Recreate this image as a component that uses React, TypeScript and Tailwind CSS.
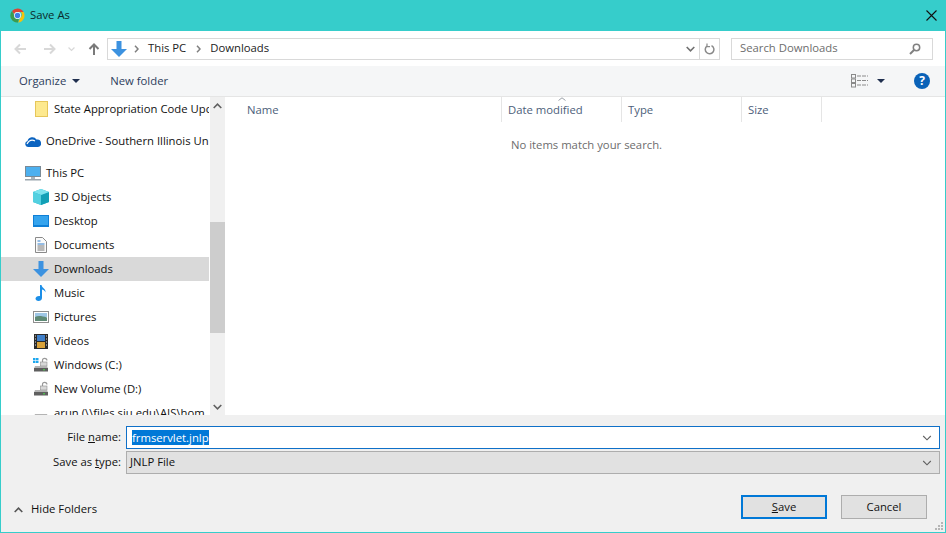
import React from "react";

const F = { fontFamily: '"Open Sans","Noto Sans",sans-serif' };

function Chrome() {
  return (
    <svg width="15" height="15" viewBox="0 0 16 16">
      <path d="M8 .5a7.500 7.500 0 0 1 6.500 3.800H8a3.700 3.700 0 0 0-3.500 2.500L2.100 3.300A7.500 7.500 0 0 1 8 .5z" fill="#db4437" />
      <path d="M14.500 4.300A7.500 7.500 0 0 1 8.600 15.500l2.700-5.600a3.700 3.700 0 0 0 .1-5.600z" fill="#f4c20d" />
      <path d="M8.600 15.500A7.500 7.500 0 0 1 2.100 3.300l3.200 5.900a3.500 3.500 0 0 0 4.100 2.200z" fill="#3b9c4f" />
      <circle cx="8" cy="8" r="3.700" fill="#fff" />
      <circle cx="8" cy="8" r="2.900" fill="#3d7fe6" />
    </svg>
  );
}

function DownArrow({ size = 16 }: { size?: number }) {
  return (
    <svg width={size} height={size} viewBox="0 0 16 16">
      <path d="M5.500 0h5v8H16l-8 8-8-8h5.500z" fill="#3c92e0" />
    </svg>
  );
}

function Arrow({ dir, color }: { dir: "left" | "right" | "up"; color: string }) {
  const d =
    dir === "left"
      ? "M13 7H3M7 2.500 2.500 7 7 11.500"
      : dir === "right"
      ? "M1 7h10M7 2.500 11.500 7 7 11.500"
      : "M7 13V3M2.500 7 7 2.500 11.500 7";
  return (
    <svg width="14" height="14" viewBox="0 0 14 14" fill="none" stroke={color} strokeWidth="2">
      <path d={d} />
    </svg>
  );
}

function Chevron({ color = "#6d6d6d", up = false, w = 9, sw = 1.6 }: { color?: string; up?: boolean; w?: number; sw?: number }) {
  return (
    <svg width={w} height={6} viewBox="0 0 9 6" fill="none" stroke={color} strokeWidth={sw}>
      <path d={up ? "M.7 5 4.500 1.200 8.300 5" : "M.7 1 4.500 4.800 8.300 1"} />
    </svg>
  );
}

function Caret() {
  return (
    <svg width="8" height="4" viewBox="0 0 8 4">
      <path d="M0 0h8L4 4z" fill="#1f2f4f" />
    </svg>
  );
}

function Drive({ win, lock = true }: { win?: boolean; lock?: boolean }) {
  return (
    <svg width="16" height="16" viewBox="0 0 16 16">
      {win && (
        <g fill="#1ea7ee">
          <rect x="0" y="1" width="2.500" height="2.200" />
          <rect x="3" y="1" width="2.500" height="2.200" />
          <rect x="0" y="3.800" width="2.500" height="2.200" />
          <rect x="3" y="3.800" width="2.500" height="2.200" />
        </g>
      )}
      {lock && (
        <>
          <path d="M9.500 6V3.500a2.200 2.200 0 0 1 4.400 0" fill="none" stroke="#9a9a9a" strokeWidth="1.200" />
          <rect x="7.500" y="5" width="6.500" height="4" fill="#d8d8d8" stroke="#8f8f8f" strokeWidth=".6" />
        </>
      )}
      <path d="M2 9h12l1 2.500H1z" fill="#b4b4b4" />
      <rect x="1" y="11" width="14" height="3.500" fill="#5f5f5f" />
      <rect x="10" y="12.300" width="2" height="1" fill="#4ade4a" />
    </svg>
  );
}

const Item = ({ indent = true, icon, label, active, cls = "" }: { indent?: boolean; icon: React.ReactNode; label: string; active?: boolean; cls?: string }) => (
  <div className={`flex items-center h-6 shrink-0 whitespace-nowrap overflow-hidden ${indent ? "pl-8" : "pl-6"} ${active ? "bg-[#d9d9d9]" : ""} ${cls}`}>
    <span className="w-4 h-4 shrink-0 flex items-center justify-center">{icon}</span>
    <span className="ml-[5px] pt-[1px] text-[#111]">{label}</span>
  </div>
);

const Col = ({ w, label, caret }: { w: string; label: string; caret?: boolean }) => (
  <div className={`${w} relative h-[25px] border-r border-[#e5e5e5] flex items-center pt-[1px] text-[#4c607a] shrink-0`}>
    {caret && (
      <span className="absolute left-[56px] top-0 flex">
        <svg width="8" height="4" viewBox="0 0 8 4" fill="none" stroke="#9aa0a8"><path d="M.5 3.500 4 .8 7.500 3.500" /></svg>
      </span>
    )}
    {label}
  </div>
);

export default function App() {
  return (
    <div style={F} className="w-[946px] h-[533px] flex flex-col overflow-hidden bg-white border border-t-0 border-[#36cdcb] text-[11.3px]">
      <div className="h-[31px] -mx-px bg-[#36cdcb] flex items-center pl-[10px] pr-[10px] shrink-0">
        <Chrome />
        <span className="ml-[5px] text-[#0b2a2a]">Save As</span>
        <svg className="ml-auto mr-[-1px]" width="11" height="11" viewBox="0 0 11 11" stroke="#111" strokeWidth="1.100">
          <path d="M.5.5l10 10M10.500.5l-10 10" />
        </svg>
      </div>

      <div className="h-[35px] shrink-0 flex items-center bg-white">
        <span className="ml-[12px]"><Arrow dir="left" color="#d8d8d8" /></span>
        <span className="ml-[16px]"><Arrow dir="right" color="#d8d8d8" /></span>
        <span className="ml-[11px]"><Chevron color="#d8d8d8" w={7} /></span>
        <span className="ml-[12px]"><Arrow dir="up" color="#7a7a7a" /></span>
        <div className="ml-[6px] w-[613px] h-[22px] border border-[#d9d9d9] flex items-center">
          <span className="ml-[3px]"><DownArrow /></span>
          <svg className="ml-[7px]" width="5" height="8" viewBox="0 0 5 8" fill="none" stroke="#808080" strokeWidth="1.500"><path d="M1 .8 4 4 1 7.200" /></svg>
          <span className="ml-[9px] text-[#222]">This PC</span>
          <svg className="ml-[10px]" width="5" height="8" viewBox="0 0 5 8" fill="none" stroke="#808080" strokeWidth="1.500"><path d="M1 .8 4 4 1 7.200" /></svg>
          <span className="ml-[9px] text-[#222]">Downloads</span>
          <span className="ml-auto mr-[4px]"><Chevron color="#707070" /></span>
          <div className="w-5 h-full border-l border-[#d9d9d9] flex items-center justify-center">
            <svg width="11" height="12" viewBox="0 0 11 12" fill="none" stroke="#8a8a8a" strokeWidth="1.500">
              <path d="M7.500 2.600A4.300 4.300 0 1 1 3 3" />
              <path d="M3 .5V3.600H6" strokeWidth="1.200" />
            </svg>
          </div>
        </div>
        <div className="ml-[11px] w-[202px] h-[22px] border border-[#d9d9d9] flex items-center pl-[8px] pr-[11px] text-[#6d6d6d]">
          <span>Search Downloads</span>
          <svg className="ml-auto" width="12" height="12" viewBox="0 0 12 12" fill="none" stroke="#808080" strokeWidth="1.500">
            <circle cx="7.500" cy="4.500" r="3.200" />
            <path d="M5 7 1 11" strokeWidth="2" />
          </svg>
        </div>
      </div>

      <div className="h-[31px] shrink-0 bg-[#f5f6f7] flex items-center border-b border-[#e5e5e5]">
        <span className="ml-[18px] text-[#2d3d5c]">Organize</span>
        <span className="ml-[6px] flex"><Caret /></span>
        <span className="ml-[30px] text-[#2d3d5c]">New folder</span>
        <svg className="ml-auto" width="17" height="14" viewBox="0 0 17 14" fill="none" stroke="#8a8a8a">
          <rect x=".5" y=".5" width="4" height="3.500" /><rect x=".5" y="5" width="4" height="3.500" /><rect x=".5" y="9.500" width="4" height="3.500" />
          <path d="M6 2h11M6 6.500h11M6 11h11" strokeDasharray="4 1" />
        </svg>
        <span className="ml-[9px] flex"><Caret /></span>
        <span className="ml-[29px] mr-[15px] w-4 h-4 rounded-full bg-[#0a62b8] text-white text-[12px] font-bold flex items-center justify-center">?</span>
      </div>

      <div className="h-[318px] shrink-0 flex bg-white overflow-hidden">
        <div className="w-[208px] h-[318px] shrink-0 flex flex-col overflow-hidden">
          <Item
            label="State Appropriation Code Upc"
            icon={
              <svg width="13" height="16" viewBox="0 0 13 16"><rect x=".5" y=".5" width="12" height="15" fill="#fde98f" stroke="#e6c65a" /></svg>
            }
          />
          <Item
            indent={false}
            cls="mt-2"
            label="OneDrive - Southern Illinois Un"
            icon={
              <svg width="16" height="11" viewBox="0 0 16 11"><path d="M3 11a3 3 0 0 1-.5-5.900A5 5 0 0 1 11.500 3.500 3.800 3.800 0 0 1 13 11z" fill="#0b63c0" /><path d="M2 8C4 4.500 7 3.500 10 5" stroke="#fff" fill="none" strokeWidth="1.200" /></svg>
            }
          />
          <Item
            indent={false}
            cls="mt-2"
            label="This PC"
            icon={
              <svg width="16" height="15" viewBox="0 0 16 15"><rect x=".5" y=".5" width="15" height="10" fill="#4db0ef" stroke="#7a8a96" /><rect x="6" y="11" width="4" height="2" fill="#a9b4bc" /><rect x="0" y="13" width="16" height="1.500" fill="#9aa5ad" /></svg>
            }
          />
          <Item
            label="3D Objects"
            icon={
              <svg width="16" height="16" viewBox="0 0 16 16"><path d="M8 0l8 3v10l-8 3-8-3V3z" fill="#21b7cd" /><path d="M8 6l8-3v10l-8 3z" fill="#12a0b6" /><path d="M8 0l8 3-8 3-8-3z" fill="#7de3ee" /><path d="M0 3l8 3v10l-8-3z" fill="#53d0e0" /></svg>
            }
          />
          <Item
            label="Desktop"
            icon={
              <svg width="16" height="12" viewBox="0 0 16 12"><rect width="16" height="12" fill="#0f7fd6" /><rect x="1" y="1" width="14" height="9" fill="#35a4ee" /></svg>
            }
          />
          <Item
            label="Documents"
            icon={
              <svg width="12" height="16" viewBox="0 0 12 16" fill="none"><path d="M.5.500h7l4 4v11H.5z" fill="#fafafa" stroke="#8a8a8a" /><path d="M2.500 4h3M2.500 7h7" stroke="#2f7fcf" /><path d="M2.500 9h7M2.500 11h7M2.500 13h7" stroke="#777" /></svg>
            }
          />
          <Item label="Downloads" active icon={<DownArrow />} />
          <Item
            label="Music"
            icon={
              <svg width="12" height="16" viewBox="0 0 12 16"><path d="M5 0h1.500c.5 3 4.500 3.500 4 7.500-.6-2-2.500-3-3.500-3V13c0 1.800-1.700 3-3.500 3S.5 15 .5 13.500 2.500 10.500 5 11z" fill="#1c8fe8" /></svg>
            }
          />
          <Item
            label="Pictures"
            icon={
              <svg width="16" height="12" viewBox="0 0 16 12"><rect x=".5" y=".5" width="15" height="11" fill="#fff" stroke="#8f8f8f" /><rect x="2" y="2" width="12" height="4" fill="#9fc7e6" /><path d="M2 6c3-1.500 7-1 12 .5V10H2z" fill="#5f8a76" /></svg>
            }
          />
          <Item
            label="Videos"
            icon={
              <svg width="14" height="15" viewBox="0 0 14 15"><rect width="14" height="15" fill="#2a2a2a" /><rect x="3" y="1" width="8" height="6" fill="#3f7fc9" /><rect x="3" y="8" width="8" height="6" fill="#d9a23a" /><path d="M1 2h1M1 5h1M1 8h1M1 11h1M12 2h1M12 5h1M12 8h1M12 11h1" stroke="#ddd" /></svg>
            }
          />
          <Item label="Windows (C:)" icon={<Drive win />} />
          <Item label="New Volume (D:)" icon={<Drive />} />
          <Item label="arun (\\files.siu.edu\AIS\hom" icon={<Drive lock={false} />} />
        </div>

        <div className="w-[15px] ml-[1px] h-full bg-[#f0f0f0] shrink-0 flex flex-col items-center">
          <div className="h-[18px] flex items-center justify-center shrink-0"><Chevron color="#606060" up /></div>
          <div className="h-[107px] shrink-0" />
          <div className="h-[111px] w-full bg-[#cdcdcd] shrink-0" />
          <div className="flex-1" />
          <div className="h-[16px] flex items-center justify-center shrink-0"><Chevron color="#606060" /></div>
        </div>
        <div className="flex-1 pl-[3px]">
          <div className="flex">
            <Col w="w-[274px] pl-[19px]" label="Name" />
            <Col w="w-[120px] pl-[6px]" label="Date modified" caret />
            <Col w="w-[120px] pl-[6px]" label="Type" />
            <Col w="w-[80px] pl-[6px]" label="Size" />
          </div>
          <div className="mt-[15px] text-center text-[#6d6d6d]">No items match your search.</div>
        </div>
      </div>

      <div className="flex-1 bg-[#f0f0f0] flex flex-col relative">
        <div className="mt-[11px] flex items-center h-[23px]">
          <span className="w-[120px] text-right text-[#111]">File <u>n</u>ame:</span>
          <div className="ml-[5px] w-[814px] h-[23px] bg-white border border-[#0f70c8] flex items-center pl-[5px] pr-[7px]">
            <span className="bg-[#0078d7] text-white leading-[15px] h-[15px]">frmservlet.jnlp</span>
            <span className="ml-auto"><Chevron color="#606060" w={10} sw={1.1} /></span>
          </div>
        </div>
        <div className="mt-[2px] flex items-center h-[23px]">
          <span className="w-[120px] text-right text-[#111]">Save as <u>t</u>ype:</span>
          <div className="ml-[5px] w-[814px] h-[23px] bg-[#e1e1e1] border border-[#adadad] flex items-center pl-[3px] pr-[7px] text-[#111]">
            <span>JNLP File</span>
            <span className="ml-auto"><Chevron color="#606060" w={10} sw={1.1} /></span>
          </div>
        </div>
        <div className="mt-[21px] flex items-center h-[24px]">
          <div className="flex items-center pt-[5px]">
            <span className="ml-[13px] flex"><Chevron color="#555" sw={1.6} up /></span>
            <span className="ml-[8px] text-[#111]">Hide Folders</span>
          </div>
          <div className="ml-auto w-[86px] h-[24px] bg-[#e1e1e1] border-2 border-[#0078d7] flex items-center justify-center text-[#111]"><span><u>S</u>ave</span></div>
          <div className="ml-[14px] mr-[18px] w-[86px] h-[24px] bg-[#e1e1e1] border border-[#adadad] flex items-center justify-center text-[#111]">Cancel</div>
        </div>
        <svg className="absolute right-[1px] bottom-[1px]" width="10" height="10" viewBox="0 0 10 10" fill="#b5b5b5">
          <rect x="7" y="1" width="2" height="2" /><rect x="4" y="4" width="2" height="2" /><rect x="7" y="4" width="2" height="2" /><rect x="1" y="7" width="2" height="2" /><rect x="4" y="7" width="2" height="2" /><rect x="7" y="7" width="2" height="2" />
        </svg>
      </div>
    </div>
  );
}
